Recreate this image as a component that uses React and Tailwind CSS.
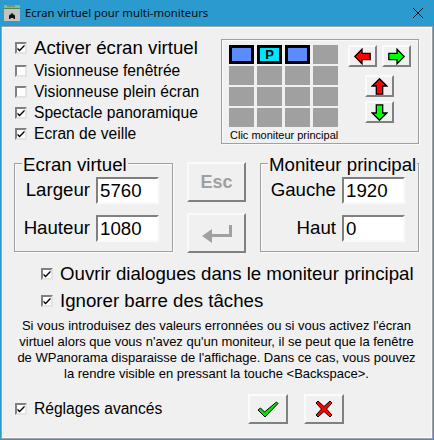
import React from 'react';

const Check = ({ checked = true }) => (
  <span className="w-[12px] h-[12px] shrink-0 bg-white border-2 border-t-[#808080] border-l-[#808080] border-r-[#e3e3e3] border-b-[#e3e3e3] flex items-center justify-center">
    {checked && (
      <svg width="8" height="8" viewBox="0 0 8 8" className="shrink-0">
        <path d="M0.500 3.500l2 2L7.500 0.500v2L2.500 7.500 0.500 5.500z" fill="#000" />
      </svg>
    )}
  </span>
);

const CheckRow = ({ label, checked, className }) => (
  <div className={`flex items-center gap-[7px] ${className}`}>
    <Check checked={checked} />
    <span className="whitespace-nowrap">{label}</span>
  </div>
);

const Btn = ({ className, children }) => (
  <div className={`flex items-center justify-center bg-[#f0f0f0] border-2 border-t-[#fafafa] border-l-[#fafafa] border-r-[#808080] border-b-[#808080] ${className}`}>
    {children}
  </div>
);

const Arrow = ({ dir, fill }) => {
  const rot = { left: 0, right: 180, up: 90, down: 270 }[dir];
  return (
    <svg width="17" height="17" viewBox="0 0 17 17" style={{ transform: `rotate(${rot}deg)` }}>
      <path d="M0.800 8.500 8 1.200V5.300H16.200V11.700H8V15.800Z" fill={fill} stroke="#000" strokeWidth="1.300" />
    </svg>
  );
};

const Field = ({ label, value }) => (
  <div className="flex items-center justify-end gap-[6px]">
    <span className="whitespace-nowrap">{label}</span>
    <span className="w-[63px] h-[27px] bg-white border-2 border-t-[#808080] border-l-[#808080] border-r-[#fafafa] border-b-[#fafafa] pl-[2px] leading-[23px]">
      {value}
    </span>
  </div>
);

const Group = ({ title, children }) => (
  <div className="relative w-[159px] h-[89px] border border-[#a0a0a0] shadow-[inset_1px_1px_0_#fafafa,1px_1px_0_#fafafa] flex flex-col gap-[10px] pt-[12px] pr-[13px] text-[18.67px]">
    <span className="absolute -top-[10px] left-[7px] bg-[#f0f0f0] leading-[21px] px-[1px] whitespace-nowrap">{title}</span>
    {children}
  </div>
);

const Cell = ({ kind }) => {
  if (kind === 'mon') return <div className="h-[19px] bg-[#5b8cff] border-[3px] border-black" />;
  if (kind === 'main')
    return (
      <div className="h-[19px] bg-[#00e5ff] border-[3px] border-black flex items-center justify-center text-[13px] font-bold leading-none">
        P
      </div>
    );
  return <div className="h-[19px] bg-[#a0a0a0]" />;
};

const cells = ['mon', 'main', 'mon', '', '', '', '', '', '', '', '', '', '', '', '', ''];

export default function App() {
  return (
    <div className="w-[434px] h-[440px] bg-[#2b9ace] flex flex-col text-black overflow-hidden" style={{ fontFamily: '"Liberation Sans", Arial, sans-serif' }}>
      {/* Title bar */}
      <div className="h-[26px] shrink-0 flex items-center pl-[4px] pr-[11px] text-[#0b0b0b]">
        <svg width="16" height="16" viewBox="0 0 16 16" className="shrink-0">
          <rect width="16" height="16" fill="#c4c4c4" />
          <rect width="16" height="3" fill="#7fb7b0" />
          <rect x="3" y="0" width="8" height="2" fill="#8a8a8a" />
          <rect y="3" width="16" height="1" fill="#4f8a3f" />
          <path d="M5 11l1-2 1 1 0.500-2h1L9 10l1-1 1 2v3H9.500v-1h-3v1H5z" fill="#111" />
        </svg>
        <span className="ml-[5px] text-[11.3px] whitespace-nowrap" style={{ fontFamily: '"Noto Sans", sans-serif' }}>Ecran virtuel pour multi-moniteurs</span>
        <svg width="10" height="10" viewBox="0 0 10 10" className="ml-auto">
          <path d="M0 0l10 10M10 0L0 10" stroke="#111" strokeWidth="1" />
        </svg>
      </div>

      {/* Dialog body */}
      <div className="flex-1 mx-[1px] mb-[1px] bg-[#f0f0f0] border border-[#a0a0a0] shadow-[inset_0_0_0_1px_#fafafa] flex flex-col pl-[12px] pr-[13px] pt-[12px]">
        <div className="flex h-[105px] justify-between">
          <div className="flex flex-col text-[15.6px] leading-[21px] pl-[1px] -mt-[2px]">
            <CheckRow label="Activer écran virtuel" className="text-[18.67px] h-[24px] mb-[2px]" />
            <CheckRow label="Visionneuse fenêtrée" checked={false} />
            <CheckRow label="Visionneuse plein écran" checked={false} />
            <CheckRow label="Spectacle panoramique" />
            <CheckRow label="Ecran de veille" />
          </div>
          <div className="w-[198px] h-[105px] border border-[#a0a0a0] shadow-[inset_1px_1px_0_#fafafa,1px_1px_0_#fafafa] flex gap-[10px] pl-[7px] pt-[5px]">
            <div className="flex flex-col">
              <div className="grid grid-cols-4 gap-x-[3px] gap-y-[2px] w-[109px]">
                {cells.map((c, i) => <Cell key={i} kind={c} />)}
              </div>
              <div className="text-[11px] leading-[14px] mt-[1px] ml-[1px] whitespace-nowrap">Clic moniteur principal</div>
            </div>
            <div className="flex flex-col items-center">
              <div className="flex gap-[5px]">
                <Btn className="w-[29px] h-[22px]"><Arrow dir="left" fill="#ff0000" /></Btn>
                <Btn className="w-[29px] h-[22px]"><Arrow dir="right" fill="#00ff00" /></Btn>
              </div>
              <Btn className="w-[29px] h-[22px] mt-[8px]"><Arrow dir="up" fill="#ff0000" /></Btn>
              <Btn className="w-[29px] h-[22px] mt-[4px]"><Arrow dir="down" fill="#00ff00" /></Btn>
            </div>
          </div>
        </div>

        <div className="flex justify-between mt-[19px] items-start">
          <Group title="Ecran virtuel">
            <Field label="Largeur" value="5760" />
            <Field label="Hauteur" value="1080" />
          </Group>
          <div className="flex flex-col gap-[11px] -mt-[1px]">
            <Btn className="w-[59px] h-[40px] text-[#a0a0a0] text-[18px] font-bold">Esc</Btn>
            <Btn className="w-[59px] h-[40px]">
              <svg width="32" height="20" viewBox="0 0 32 20">
                <path d="M1 13l10-7v5h17V2h3v12H11v6z" fill="#a0a0a0" />
              </svg>
            </Btn>
          </div>
          <Group title="Moniteur principal">
            <Field label="Gauche" value="1920" />
            <Field label="Haut" value="0" />
          </Group>
        </div>

        <div className="flex flex-col pl-[27px] text-[18.67px] mt-[10px] gap-[6px]">
          <CheckRow label="Ouvrir dialogues dans le moniteur principal" className="h-[21px]" />
          <CheckRow label="Ignorer barre des tâches" className="h-[21px]" />
        </div>

        <p className="text-[13px] leading-[16px] text-center mt-[7px] whitespace-pre-line">
          {"Si vous introduisez des valeurs erronnées ou si vous activez l'écran\nvirtuel alors que vous n'avez qu'un moniteur, il se peut que la fenêtre\nde WPanorama disparaisse de l'affichage. Dans ce cas, vous pouvez\nla rendre visible en pressant la touche <Backspace>."}
        </p>

        <div className="flex items-center mt-[12px]">
          <CheckRow label="Réglages avancés" className="text-[15.6px] w-[234px] pl-[1px]" />
          <Btn className="w-[40px] h-[30px]">
            <svg width="22" height="17" viewBox="0 0 22 17">
              <path d="M1 9l2.500-2 4 4L19.500 1l1.500 1.500L8 16z" fill="#00e800" stroke="#000" strokeWidth="1" />
            </svg>
          </Btn>
          <Btn className="w-[40px] h-[30px] ml-[16px]">
            <svg width="18" height="18" viewBox="0 0 18 18">
              <path d="M1 3l2-2 6 5.500L15 1l2 2-5.500 6L17 15l-2 2-6-5.500L3 17l-2-2 5.500-6z" fill="#ff0000" stroke="#000" strokeWidth="1" />
            </svg>
          </Btn>
        </div>
      </div>
    </div>
  );
}
